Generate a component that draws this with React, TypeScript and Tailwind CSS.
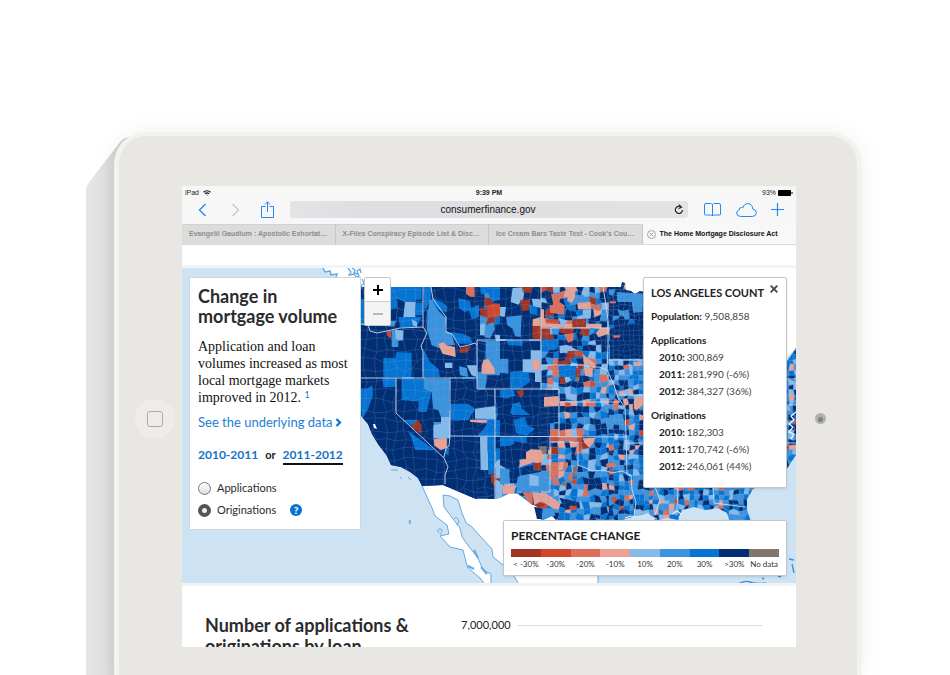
import React, { useState } from "react";

const NAVY = "#022e74";
const BLUE = "#0574d2";
const MID = "#3b92dd";
const PALE = "#86bbe9";
const SALMON = "#e9a294";
const CORAL = "#dd6e59";
const RED = "#d2472c";
const BRICK = "#a23423";
const GRAY = "#80766d";
const WATER = "#cde3f4";
const COAST = "#62aae2";

/* ---------- county mosaic ---------- */

function hash(a: number, b: number, c: number) {
  const s = Math.sin(a * 127.1 + b * 311.7 + c * 74.7) * 43758.5453;
  return s - Math.floor(s);
}

type Weights = [string, number][];

const WEST: Weights = [[NAVY, 74], [BLUE, 16], [MID, 7], [PALE, 2], [SALMON, 1]];
const ROCKIES: Weights = [[NAVY, 55], [BLUE, 22], [MID, 13], [PALE, 6], [SALMON, 2], [BRICK, 2]];
const DAKOTA: Weights = [[NAVY, 42], [BLUE, 17], [MID, 14], [PALE, 9], [SALMON, 7], [CORAL, 5], [BRICK, 5], [RED, 1]];
const PLAINS: Weights = [[NAVY, 27], [BLUE, 23], [MID, 19], [PALE, 15], [SALMON, 7], [CORAL, 5], [BRICK, 2], [RED, 2]];
const NORTH: Weights = [[NAVY, 80], [BLUE, 8], [MID, 8], [PALE, 2], [SALMON, 2]];
const MIDWEST: Weights = [[NAVY, 19], [BLUE, 29], [MID, 29], [PALE, 14], [SALMON, 5], [CORAL, 3], [RED, 1]];

function pick(weights: Weights, r: number) {
  let left = r * 100;
  for (const [color, w] of weights) {
    left -= w;
    if (left <= 0) return color;
  }
  return weights[0][0];
}

function weightsAt(x: number, y: number) {
  if (x < 477) return WEST;
  if (x < 541) return ROCKIES;
  if (x > 606 && y < 345) return NORTH;
  if (x < 595 && y < 380) return DAKOTA;
  if (x < 595 && y < 490) return PLAINS;
  return MIDWEST;
}

function mosaic(x0: number, x1: number, y0: number, y1: number, size: number, seed: number) {
  const cells: { points: string; fill: string }[] = [];
  const cols = Math.ceil((x1 - x0) / size);
  const rows = Math.ceil((y1 - y0) / size);
  const vertex = (i: number, j: number) => {
    const jx = i === 0 || i === cols ? 0 : (hash(i, j, seed) - 0.5) * size * 0.55;
    const jy = (hash(i, j, seed + 9) - 0.5) * size * 0.55;
    return `${(x0 + i * size + jx).toFixed(1)},${(y0 + j * size + jy).toFixed(1)}`;
  };
  for (let j = 0; j < rows; j++) {
    for (let i = 0; i < cols; i++) {
      cells.push({
        points: [vertex(i, j), vertex(i + 1, j), vertex(i + 1, j + 1), vertex(i, j + 1)].join(" "),
        fill: pick(weightsAt(x0 + i * size, y0 + j * size), hash(i, j, seed + 31)),
      });
    }
  }
  return cells;
}

const COUNTIES = [
  ...mosaic(355, 477, 280, 505, 10, 3),
  ...mosaic(477, 541, 280, 505, 9, 5),
  ...mosaic(541, 609, 280, 530, 6, 8),
  ...mosaic(609, 799, 280, 530, 5, 12),
];

/* ---------- larger counties, each group on a fine grid of thirds ---------- */

type Shape = [string, string];

const NORTHWEST: Shape[] = [
  [NAVY, "18,190 205,197 200,345 18,345"],
  [BLUE, "105,75 200,75 200,112 165,118 150,120 120,108 105,130"],
  [PALE, "150,120 182,120 180,165 145,165"],
  [BLUE, "182,122 203,122 203,160 182,160"],
  [BLUE, "130,165 200,165 185,195 135,195"],
  [PALE, "170,172 186,180 186,195 174,190"],
  [RED, "95,210 108,206 110,230 97,222"],
  [MID, "110,205 145,205 145,235 130,237 130,255 110,255"],
  [PALE, "120,202 145,207 143,235 122,232"],
  [BLUE, "18,110 30,110 30,130 18,155"],
  [BLUE, "85,288 120,288 125,270 170,272 170,345 85,345"],
  [NAVY, "230,75 375,75 375,237 366,330 366,345 230,345 206,262"],
  [BLUE, "205,75 230,75 228,112 218,130 208,150"],
  [BLUE, "205,260 225,300 250,320 255,345 205,345"],
  [MID, "222,115 235,112 245,140 275,170 270,205 290,215 300,250 262,250 262,262 230,250 215,200"],
  [SALMON, "250,245 266,241 275,250 300,255 302,285 262,275"],
  [BRICK, "315,258 350,252 335,272 312,272"],
  [PALE, "270,302 292,302 292,318 270,318"],
  [BLUE, "285,210 312,245 355,245 345,225 325,215"],
  [BLUE, "230,108 262,120 278,135 275,150 245,142"],
  [CORAL, "333,75 359,75 359,105 345,104 333,95"],
  [BRICK, "372,140 385,137 398,142 400,168 378,162"],
  [RED, "395,132 418,124 438,125 440,150 430,166 400,166"],
  [BLUE, "310,108 345,118 350,145 328,150 312,138"],
  [BLUE, "375,75 450,75 450,110 410,120 400,92 378,98"],
  [BLUE, "340,140 372,128 372,165 350,172"],
  [MID, "390,190 415,180 420,200 405,230 388,225"],
  [MID, "368,237 450,237 450,345 395,345 390,380 368,380"],
  [NAVY, "368,237 392,240 392,295 378,330 368,330"],
  [SALMON, "380,310 386,293 400,291 418,318 420,335 380,335"],
  [PALE, "335,310 365,310 365,345 350,340"],
  [MID, "312,312 335,318 340,345 315,340"],
  [NAVY, "395,340 450,340 450,380 395,380"],
  [NAVY, "18,350 122,350 122,480 18,480"],
  [BLUE, "18,380 35,380 52,370 54,400 40,440 22,470 18,440"],
  [BLUE, "82,347 122,347 122,375 85,375"],
  [NAVY, "122,350 283,350 283,480 150,480 122,455"],
  [BLUE, "140,350 205,350 205,375 230,390 215,450 190,450 190,418 140,415"],
  [MID, "205,350 283,350 283,465 258,465 250,445 235,440 230,390 205,380"],
  [PALE, "258,465 283,465 283,480 258,480"],
  [NAVY, "286,350 365,350 365,440 286,480"],
  [BLUE, "286,425 340,425 360,440 340,475 286,475"],
  [PALE, "360,440 420,432 420,470 360,470"],
  [SALMON, "345,473 392,473 392,480 345,480"],
];

const SOUTHWEST: Shape[] = [
  [NAVY, "0,0 130,0 285,110 280,200 80,200"],
  [NAVY, "285,50 420,50 420,235 270,235"],
  [BLUE, "145,0 190,0 170,18"],
  [BRICK, "167,20 187,0 200,15 200,42"],
  [BLUE, "158,32 240,90 180,90 172,60"],
  [NAVY, "202,0 236,0 236,80 202,50"],
  [PALE, "258,0 285,0 285,55 235,55 235,15 258,12"],
  [SALMON, "345,0 395,0 395,8 345,8"],
  [NAVY, "286,0 345,5 380,10 370,48 286,48"],
  [BLUE, "368,47 395,15 398,0 420,0 420,50"],
  [PALE, "375,50 398,50 398,90 402,150 377,150"],
  [BLUE, "398,50 420,50 420,160 400,165"],
  [BRICK, "408,160 420,160 420,200 408,185"],
  [BLUE, "422,85 450,85 450,112 422,118"],
  [PALE, "422,130 450,130 450,175 422,175"],
  [BLUE, "422,0 450,0 450,50 422,50"],
  [PALE, "422,178 445,190 440,235 422,235"],
  [SALMON, "443,200 485,196 475,222 443,222"],
];

const DAKOTAS: Shape[] = [
  [NAVY, "0,75 122,75 122,232 0,232"],
  [PALE, "38,78 75,75 70,110 55,128 32,120"],
  [BRICK, "65,75 97,75 93,93 70,92"],
  [BRICK, "60,115 90,112 88,145 66,148"],
  [BLUE, "86,130 112,125 112,160 90,155"],
  [PALE, "95,110 122,112 122,138 100,132"],
  [MID, "18,165 65,160 62,225 45,222 38,200 22,190"],
  [PALE, "0,135 18,135 14,165 0,162"],
  [NAVY, "0,237 122,237 122,380 0,380"],
  [BLUE, "20,235 68,235 68,252 25,250"],
  [MID, "0,290 25,290 25,335 0,332"],
  [BLUE, "30,330 85,325 90,360 60,380 30,380"],
  [PALE, "68,292 92,292 92,265 122,265 122,360 105,360 105,332 68,330"],
  [SALMON, "98,293 120,293 120,325 98,322"],
  [BRICK, "97,190 150,190 150,225 122,232 97,230"],
  [SALMON, "98,172 122,165 122,192 98,192"],
  [SALMON, "123,142 132,142 132,168 148,172 178,185 305,185 305,198 123,196"],
  [RED, "135,172 176,172 176,186 138,184"],
  [BRICK, "135,145 145,142 147,168 135,166"],
  [CORAL, "153,95 180,95 178,120 194,130 192,158 150,152 148,130 160,128"],
  [SALMON, "192,75 226,75 226,105 216,122 202,118 202,90"],
  [PALE, "175,168 205,176 185,195"],
  [BRICK, "217,172 258,170 258,196 217,196"],
  [MID, "226,98 252,100 258,122 232,124"],
  [SALMON, "232,122 272,120 272,142 234,142"],
  [PALE, "248,142 274,142 272,170 248,168"],
  [CORAL, "286,130 302,128 300,146 288,146"],
  [SALMON, "300,198 330,196 328,215 295,226 288,214"],
  [BRICK, "178,198 222,198 220,215 182,214"],
  [CORAL, "192,216 222,214 220,236 204,242"],
  [BRICK, "242,198 268,200 266,222 240,220"],
  [BLUE, "125,235 178,230 172,262 126,268"],
  [PALE, "178,252 200,248 240,268 215,270 180,274"],
  [BRICK, "203,268 225,266 222,290 198,295"],
  [RED, "222,266 244,266 256,282 240,284 224,282"],
  [SALMON, "246,275 266,290 286,305 284,318 258,305"],
  [BRICK, "176,297 198,295 196,308 176,308"],
  [CORAL, "157,312 176,312 176,345 158,345"],
  [BLUE, "177,312 230,312 228,345 177,345"],
  [BRICK, "228,318 242,320 240,345 226,342"],
  [SALMON, "252,318 278,318 278,345 256,342"],
  [CORAL, "142,348 158,345 160,368 142,366"],
  [BRICK, "180,346 195,346 194,366 180,366"],
  [GRAY, "226,346 240,346 238,358 226,358"],
  [NAVY, "0,384 175,384 175,480 0,480"],
  [BLUE, "0,384 42,384 45,402 18,410 0,405"],
  [BRICK, "48,386 70,384 72,400 60,406"],
  [BLUE, "38,425 60,420 66,440 92,460 80,478 50,470 30,452"],
  [SALMON, "132,405 175,402 175,432 132,434"],
  [SALMON, "180,418 232,418 232,432 180,432"],
  [RED, "195,420 212,422 210,436 196,434"],
  [CORAL, "258,418 288,418 286,434 258,432"],
  [NAVY, "330,200 428,180 428,290 330,290"],
  [MID, "350,90 428,95 428,150 400,152 395,120 352,120"],
  [CORAL, "328,118 348,118 348,124 330,124"],
  [SALMON, "400,300 424,300 422,312 402,312"],
  [SALMON, "402,408 428,402 428,430 410,445 402,440"],
  [CORAL, "338,220 362,220 360,226 342,228"],
];

const TEXAS: Shape[] = [
  [NAVY, "0,0 150,0 150,64 0,64"],
  [BLUE, "40,15 75,5 82,30 105,42 80,62 48,55"],
  [BLUE, "0,65 45,65 42,88 0,96"],
  [NAVY, "0,95 62,90 78,105 55,155 60,185 0,150"],
  [NAVY, "80,66 150,66 150,105 112,95 80,100"],
  [SALMON, "78,112 92,103 128,104 132,125 122,150 102,142 60,156 58,134 78,132"],
  [GRAY, "112,94 140,94 140,116 128,118 124,106"],
  [BRICK, "98,146 124,142 124,164 104,164"],
  [NAVY, "62,158 98,150 100,165 122,168 120,180 62,182"],
  [MID, "58,182 148,166 148,228 50,228"],
  [PALE, "88,178 116,184 116,212 88,212"],
  [MID, "0,160 28,162 32,205 0,208"],
  [NAVY, "28,170 55,175 50,205 30,205"],
  [SALMON, "8,212 32,208 32,235 8,237"],
  [CORAL, "150,42 178,42 178,65 150,65"],
  [RED, "152,66 176,66 176,80 152,80"],
  [CORAL, "178,66 232,66 232,78 178,78"],
  [RED, "232,66 246,66 244,98 234,118"],
  [CORAL, "152,142 204,142 204,155 190,168 176,168 176,180 152,198"],
  [SALMON, "178,142 192,142 188,165 174,165"],
  [GRAY, "218,156 232,150 230,185 220,184"],
  [CORAL, "206,174 218,172 216,196 206,196"],
  [GRAY, "186,200 200,198 200,212 186,212"],
  [CORAL, "68,233 98,233 98,270 82,258"],
  [SALMON, "98,233 138,235 182,265 176,284 158,280 130,262 102,272"],
  [BRICK, "102,270 122,260 135,270 118,280"],
  [NAVY, "100,275 128,280 126,312 108,312"],
  [MID, "128,282 160,282 166,300 150,316 126,316"],
  [NAVY, "178,248 238,262 240,280 196,285"],
  [RED, "208,272 230,272 230,284 208,284"],
  [RED, "334,248 344,244 352,256 340,264"],
  [CORAL, "318,146 344,142 348,156 320,158"],
  [SALMON, "248,70 286,68 280,84 268,98 252,82"],
];

const BORDERS = [
  "361,324 368,325 370,331 377,333 387,331 400,328 423,327",
  "423,287 423,327 427,333 421,346 423,352 423,378",
  "361,378 477,378",
  "431,287 433,299 446,317 446,332 452,334 460,347 469,345 475,343 477,345",
  "477,340 541,340",
  "477,340 477,389 559,389 559,437",
  "541,287 541,389",
  "450,378 450,436 449,446 446,448 444,457",
  "396,378 396,413 444,458 448,467 445,475 445,484",
  "495,389 495,499",
  "450,436 627,437",
  "550,437 550,492 517,492",
  "550,442 578,442 578,465 586,468 592,471 604,470 612,473 622,471 631,475",
  "541,328 608,328",
  "541,365 582,365 590,367 599,367 607,370",
  "603,287 606,305 608,320 608,345 607,370 614,385 618,398 625,407 626,437 627,475 632,476",
  "559,402 620,402",
  "609,360 648,360",
  "617,395 648,395",
  "627,443 648,443",
  "631,475 632,490 636,502 634,516",
  "655,487 660,500 655,515",
  "678,487 677,509",
  "713,487 714,503 745,507",
  "786,379 796,379",
  "786,405 796,405",
  "786,443 796,443",
];

const US_OUTLINE =
  "355,287 621,287 622,282 625,283 626,290 631,291 635,294 640,291 650,293 700,300 740,340 780,368 788,360 796,348 796,455 790,464 786,470 766,482 753,489 747,499 747,510 751,522 730,522 727,513 718,508 706,510 694,507 682,510 678,520 668,518 656,520 648,513 636,516 625,519 615,524 560,524 552,516 541,521 537,519 534,506 523,498 517,493 508,494 500,498 495,499 476,499 443,485 422,486 418,478 410,472 401,467 391,465 387,456 378,444 372,434 368,424 362,417 355,405";

const GROUPS: { at: string; shapes: Shape[] }[] = [
  { at: "translate(355 262) scale(0.3333)", shapes: NORTHWEST },
  { at: "translate(355 420) scale(0.3333)", shapes: SOUTHWEST },
  { at: "translate(500 262) scale(0.3333)", shapes: DAKOTAS },
  { at: "translate(500 415) scale(0.3333)", shapes: TEXAS },
];

function MortgageMap() {
  return (
    <svg
      className="block h-full w-full"
      viewBox="182 268 614 315"
      preserveAspectRatio="xMidYMid slice"
      role="img"
      aria-label="County map of mortgage volume change"
    >
      <defs>
        <clipPath id="us">
          <polygon points={US_OUTLINE} />
        </clipPath>
      </defs>
      <rect x="0" y="200" width="1000" height="500" fill={WATER} />
      <polygon
        fill="#fff"
        points="322,268 326,272 332,273 336,277 344,281 356,290 620,300 760,370 788,356 796,348 796,268"
      />
      <polyline fill="none" stroke={COAST} strokeWidth="1.5" points="323,268 325,272 330,271 331,275 337,274 336,277" />
      <g fill="none" stroke={COAST} strokeWidth="1.3">
        <polyline points="348,268 351,272 349,275 354,274 356,277 359,276 357,271 360,269 361,273" />
        <polyline points="352,268 355,270 354,273 358,274" />
        <polyline points="362,279 364,283 361,286 364,290 363,296" />
      </g>
      <polygon
        fill="#fff"
        stroke={COAST}
        strokeWidth="1"
        points="422,486 427,497 432,508 435,516 447,525 449,534 440,536 450,547 463,550 466,562 468,568 480,578 486,586 491,584 491,574 483,570 478,558 470,548 462,537 460,528 453,519 444,507 443,495 450,496 458,500 462,513 466,523 472,527 480,536 492,549 493,557 503,565 512,573 520,586 598,586 598,540 612,524 560,500 508,492 476,497 443,483"
      />
      <g fill="none" stroke={COAST} strokeWidth="1">
        <path d="M439 533q-3-4 1-4t0 6M454 519q3-4 5 3l-2 3M410 520q1 3 0 4q-2-2 0-4M391 470h7M400 477l2 2M408 477l3 3" />
        <path d="M474 550l4 8M481 567l6 7M468 566l6 3" strokeWidth="2" />
      </g>
      <g clipPath="url(#us)">
        <g strokeWidth="0.4">
          {COUNTIES.map((c, i) => (
            <polygon key={i} points={c.points} fill={c.fill} stroke={c.fill} />
          ))}
        </g>
        {GROUPS.map((g) => (
          <g key={g.at} transform={g.at}>
            {g.shapes.map(([fill, points], i) => (
              <polygon key={i} points={points} fill={fill} />
            ))}
          </g>
        ))}
        <g fill="none" stroke="#86b0e4" strokeWidth="0.5" strokeOpacity="0.22">
          {COUNTIES.map((c, i) => (
            <polygon key={i} points={c.points} />
          ))}
        </g>
        <g fill="none" stroke="#c9dcf0" strokeWidth="0.9">
          {BORDERS.map((p, i) => (
            <polyline key={i} points={p} />
          ))}
        </g>
      </g>
      <path d="M373 424l1 4l3 1l-2-5z" fill="#fff" />
      <g fill="none" stroke="#fff" strokeWidth="1.2">
        <path d="M796 412l-5 4l3 4l-5 4l4 3l-4 5l5 2l-3 5" />
        <path d="M625 518l6-2l5 1M672 514l5-3l4 3l-2 4M652 517l5 2" stroke="#dbeaf7" />
      </g>
      <g fill="none" stroke={MID} strokeWidth="1.4">
        <path d="M738 584q8-4 12-2t16 1M785 549l2 2M789 559l5 1M792 564l2 9M778 576l3 1M762 578l2 1" />
      </g>
    </svg>
  );
}

/* ---------- browser chrome ---------- */

function BrowserChrome() {
  const tabs = [
    "Evangelii Gaudium : Apostolic Exhortation",
    "X-Files Conspiracy Episode List & Discussion",
    "Ice Cream Bars Taste Test - Cook's Country",
  ];
  return (
    <header className="font-['Liberation_Sans',Arial,sans-serif]">
      <div className="bg-[#f7f7f8]">
        <div className="grid h-[13px] grid-cols-3 items-center px-[3px] text-[7px] leading-3 text-[#222]">
          <span className="flex items-center gap-1">
            iPad
            <svg className="h-[6px] w-[8px]" viewBox="0 0 16 12" fill="none" stroke="#111" strokeWidth="2.4">
              <path d="M1 4.5q7-6 14 0M4 7.5q4-3.500 8 0" />
              <path d="M6.500 9.500h3L8 11.500z" fill="#111" stroke="none" />
            </svg>
          </span>
          <span className="text-center font-bold">9:39 PM</span>
          <span className="flex items-center justify-end gap-[2px]">
            93%
            <svg className="h-[6px] w-[15px]" viewBox="0 0 15 6">
              <rect x="0" y="0" width="13" height="6" rx="1" fill="#000" />
              <rect x="13.500" y="2" width="1" height="2" fill="#000" />
            </svg>
          </span>
        </div>
        <div className="flex h-[25px] items-center pr-3 pb-[4px] pl-[16px] text-[#2388f5]">
          <button type="button" aria-label="Back" className="w-[10px]">
            <svg className="h-[14px] w-[9px]" viewBox="0 0 9 14" fill="none" stroke="currentColor" strokeWidth="1.4">
              <path d="M7.500 1L1.500 7l6 6" />
            </svg>
          </button>
          <button type="button" aria-label="Forward" className="ml-[23px] w-[10px] text-[#c5c6c9]">
            <svg className="h-[14px] w-[9px]" viewBox="0 0 9 14" fill="none" stroke="currentColor" strokeWidth="1.200">
              <path d="M1.500 1l6 6l-6 6" />
            </svg>
          </button>
          <button type="button" aria-label="Share" className="ml-5 w-[14px]">
            <svg className="h-[17px] w-[13px]" viewBox="0 0 13 17" fill="none" stroke="currentColor">
              <path d="M4.500 5.500h-4v11h12v-11h-4M6.500 11V.8M3.800 3.500L6.500.8l2.700 2.700" />
            </svg>
          </button>
          <div className="ml-[15px] flex h-[17px] min-w-0 flex-1 items-center rounded-[3px] bg-linear-to-r from-[#e4e4e7] via-[#dddee2] via-20% to-[#e3e3e5] pr-1">
            <input
              type="text"
              aria-label="Address"
              defaultValue="consumerfinance.gov"
              className="h-full min-w-0 flex-1 bg-transparent pl-3 text-center text-[10px] text-[#111] outline-none"
            />
            <button type="button" aria-label="Reload" className="text-[#222]">
              <svg className="h-[11px] w-[10px]" viewBox="0 0 10 11" fill="none" stroke="currentColor" strokeWidth="1.200">
                <path d="M8.500 6a3.600 3.600 0 1 1-1.300-2.900" />
                <path d="M4.800.6L7.500 3.200L4.500 4.500" />
              </svg>
            </button>
          </div>
          <button type="button" aria-label="Bookmarks" className="ml-4">
            <svg className="h-[15px] w-[17px]" viewBox="0 0 17 15" fill="none" stroke="currentColor">
              <path d="M8.500 2.500Q8 1.500 6.500 1.500H2Q.5 1.500.5 3v9q0 1 1 1h5q1.500 0 2 1q.5-1 2-1h5q1 0 1-1V3q0-1.500-1.500-1.500h-4.500Q9 1.500 8.500 2.500V14" />
            </svg>
          </button>
          <button type="button" aria-label="iCloud tabs" className="ml-[15px]">
            <svg className="h-[14px] w-[21px]" viewBox="0 0 21 14" fill="none" stroke="currentColor">
              <path d="M4.500 13.500Q.6 13.200.6 10Q.8 7.500 3.200 7Q3 4.500 5.500 4.500Q6.200 4.500 6.800 4.900Q8 .6 12 .6Q16.500 1 16.700 6Q20.400 6.500 20.400 9.800Q20.200 13.200 16.500 13.500Z" />
            </svg>
          </button>
          <button type="button" aria-label="New tab" className="ml-[14px]">
            <svg className="h-[13px] w-[13px]" viewBox="0 0 13 13" fill="none" stroke="currentColor" strokeWidth="1.200">
              <path d="M6.500 0v13M0 6.500h13" />
            </svg>
          </button>
        </div>
      </div>
      <nav className="grid h-[21px] grid-cols-4 border-b border-[#d8d8da] text-[7px] font-bold">
        {tabs.map((t) => (
          <button
            key={t}
            type="button"
            className="truncate border-t border-r border-t-[#d2d2d2] border-r-[#c6c6c6] bg-[#dcdcdc] px-[7px] text-left text-[#8e8e8e]"
          >
            {t}
          </button>
        ))}
        <button
          type="button"
          className="flex items-center gap-1 bg-[#f8f8f9] pl-1 whitespace-nowrap text-[#111]"
        >
          <svg className="h-[9px] w-[9px]" viewBox="0 0 9 9" fill="none" stroke="#888" strokeWidth="0.700">
            <circle cx="4.500" cy="4.500" r="4" />
            <path d="M2.800 2.800l3.400 3.400M6.200 2.800L2.800 6.200" />
          </svg>
          The Home Mortgage Disclosure Act
        </button>
      </nav>
    </header>
  );
}

/* ---------- panels over the map ---------- */

const RADIO =
  "h-[13px] w-[13px] shrink-0 appearance-none rounded-full border border-[#777] bg-linear-to-b from-white to-[#ddd] checked:border-4 checked:border-[#555] checked:bg-none checked:bg-[#eee]";

function VolumePanel() {
  const [kind, setKind] = useState("originations");
  return (
    <section className="absolute top-[9px] left-[7px] h-[253px] w-[172px] border border-[#d3d6d8] bg-white pt-2 pl-2 text-[#2b2b2e]">
      <h1 className="text-[18px] leading-5 font-bold whitespace-nowrap">
        Change in
        <br />
        mortgage volume
      </h1>
      <p className="mt-3 font-['Liberation_Serif',Georgia,serif] text-[14px] leading-[17px] whitespace-nowrap text-[#111]">
        Application and loan
        <br />
        volumes increased as most
        <br />
        local mortgage markets
        <br />
        improved in 2012.{" "}
        <a href="#note" className="align-[4px] font-[Lato,sans-serif] text-[9px] leading-none text-[#1a7fd4]">
          1
        </a>
      </p>
      <a href="#data" className="mt-2 flex items-center gap-[2px] text-[13px] leading-4 whitespace-nowrap text-[#1d80d2]">
        See the underlying data
        <svg className="h-[9px] w-[7px]" viewBox="0 0 7 9" fill="none" stroke="#0f72cc" strokeWidth="2.200">
          <path d="M1.500 1l3.500 3.500L1.500 8" />
        </svg>
      </a>
      <div className="mt-[17px] flex items-baseline text-[12px] leading-4 font-bold text-[#1473cb]">
        <button type="button">2010-2011</button>
        <span className="mx-[7px] text-[11px] text-[#222]">or</span>
        <button type="button" className="border-b-2 border-[#111]">2011-2012</button>
      </div>
      <div className="mt-[15px] flex flex-col gap-[6px] text-[11px] leading-4">
        <label className="flex items-center gap-[6px]">
          <input
            type="radio"
            name="kind"
            className={RADIO}
            checked={kind === "applications"}
            onChange={() => setKind("applications")}
          />
          Applications
        </label>
        <div className="flex items-center">
          <label className="flex items-center gap-[6px]">
            <input
              type="radio"
              name="kind"
              className={RADIO}
              checked={kind === "originations"}
              onChange={() => setKind("originations")}
            />
            Originations
          </label>
          <button
            type="button"
            aria-label="What are originations?"
            className="ml-[14px] h-3 w-3 rounded-full bg-[#0b72cf] text-center text-[10px] leading-3 font-black text-white"
          >
            ?
          </button>
        </div>
      </div>
    </section>
  );
}

function ZoomControl() {
  return (
    <div className="absolute top-[9px] left-[182px] flex w-[27px] flex-col rounded-[2px] border border-[#c4c6c8] bg-white">
      <button type="button" aria-label="Zoom in" className="flex h-[23px] items-center justify-center">
        <svg className="h-[10px] w-[10px]" viewBox="0 0 10 10" stroke="#000" strokeWidth="2">
          <path d="M5 0v10M0 5h10" />
        </svg>
      </button>
      <button
        type="button"
        aria-label="Zoom out"
        className="flex h-6 items-center justify-center border-t border-[#ccc] bg-[#f4f4f4]"
      >
        <svg className="h-[10px] w-[10px]" viewBox="0 0 10 10" stroke="#b8b8b8" strokeWidth="2">
          <path d="M0 5h10" />
        </svg>
      </button>
    </div>
  );
}

function Figures({ title, rows }: { title: string; rows: [string, string][] }) {
  return (
    <div className="mt-[7px]">
      <h3 className="font-bold text-[#222]">{title}</h3>
      <dl className="pl-2">
        {rows.map(([year, value]) => (
          <div key={year} className="flex gap-[2px]">
            <dt className="font-bold text-[#222]">{year}:</dt>
            <dd>{value}</dd>
          </div>
        ))}
      </dl>
    </div>
  );
}

function CountyPanel() {
  return (
    <section className="absolute top-[9px] right-[9px] h-[211px] w-[144px] rounded-[2px] border border-[#c3c7ca] bg-white pt-[7px] pl-[7px] text-[10px] leading-[17px] text-[#444] shadow-sm">
      <div className="flex">
        <h2 className="w-[116px] text-[11px] leading-4 font-bold whitespace-nowrap text-[#222]">
          LOS ANGELES COUNT
        </h2>
        <button type="button" aria-label="Close" className="ml-[3px] h-2">
          <svg className="h-2 w-2" viewBox="0 0 8 8" stroke="#444" strokeWidth="1.800">
            <path d="M.7.700l6.600 6.600M7.300.700L.7 7.300" />
          </svg>
        </button>
      </div>
      <p className="mt-[7px]">
        <strong className="text-[#222]">Population:</strong> 9,508,858
      </p>
      <Figures title="Applications" rows={[["2010", "300,869"], ["2011", "281,990 (-6%)"], ["2012", "384,327 (36%)"]]} />
      <Figures title="Originations" rows={[["2010", "182,303"], ["2011", "170,742 (-6%)"], ["2012", "246,061 (44%)"]]} />
    </section>
  );
}

function Legend() {
  const steps = [
    ["< -30%", "bg-[#a23423]"],
    ["-30%", "bg-[#d2472c]"],
    ["-20%", "bg-[#dd6e59]"],
    ["-10%", "bg-[#e9a294]"],
    ["10%", "bg-[#86bbe9]"],
    ["20%", "bg-[#3b92dd]"],
    ["30%", "bg-[#0574d2]"],
    [">30%", "bg-[#022e74]"],
    ["No data", "bg-[#80766d]"],
  ];
  return (
    <section className="absolute right-[9px] bottom-[7px] w-[284px] rounded-[2px] border border-[#c3c7ca] bg-white px-[7px] pt-[7px] pb-[5px] shadow-sm">
      <h2 className="text-[12px] leading-4 font-bold text-[#1c1c1c]">PERCENTAGE CHANGE</h2>
      <ul className="mt-[5px] grid grid-cols-9 text-center text-[8px] leading-3 whitespace-nowrap text-[#333]">
        {steps.map(([label, color]) => (
          <li key={label}>
            <div className={`mb-px h-2 ${color}`} />
            {label}
          </li>
        ))}
      </ul>
    </section>
  );
}

/* ---------- page ---------- */

export default function App() {
  return (
    <div className="relative flex h-screen flex-col overflow-hidden bg-white pt-[132px] pr-[88px] pl-[114px] font-[Lato,'Noto_Sans',sans-serif]">
      <svg className="absolute top-[137px] left-[86px] h-full w-[60px]" viewBox="0 0 60 675" preserveAspectRatio="xMinYMin slice" aria-hidden="true">
        <defs>
          <linearGradient id="side" x1="0" x2="1">
            <stop offset="0" stopColor="#e6e6e6" />
            <stop offset="0.300" stopColor="#e0e0e0" />
            <stop offset="0.500" stopColor="#d2d2d2" />
          </linearGradient>
        </defs>
        <path d="M0 675V54Q0 49 4 44L34 5Q38 0 46 0H60V675Z" fill="url(#side)" />
      </svg>
      <main className="relative flex min-h-0 flex-1 rounded-t-[32px] border-x-[5px] border-t-4 border-[#f3f3eb] bg-[#e8e7e3] pt-[50px] pb-[28px] shadow-[0_0_24px_rgba(0,0,0,0.06)]">
        <div className="flex w-[63px] shrink-0 items-center justify-center pt-1 pl-2">
          <button
            type="button"
            aria-label="Home"
            className="flex h-10 w-10 items-center justify-center rounded-full bg-[#edece8]"
          >
            <span className="h-4 w-4 rounded-[3px] border border-[#acaba6]" />
          </button>
        </div>
        <div className="flex min-w-0 flex-1 flex-col overflow-hidden bg-white">
          <BrowserChrome />
          <div className="relative mt-5 h-[321px] shrink-0 border-y-[3px] border-[#f3f3f3]">
            <MortgageMap />
            <VolumePanel />
            <ZoomControl />
            <CountyPanel />
            <Legend />
          </div>
          <section className="flex shrink-0 gap-[38px] pt-[29px] pr-[33px] pl-[23px]">
            <h2 className="w-[218px] shrink-0 text-[18px] leading-[21px] font-bold text-[#2b2b2e]">
              Number of applications & originations by loan
            </h2>
            <div className="flex h-5 flex-1 items-center gap-[6px] text-[11px] text-[#222]">
              7,000,000
              <hr className="flex-1 border-[#dedede]" />
            </div>
          </section>
        </div>
        <div className="flex w-[61px] shrink-0 items-center justify-center pt-1 pr-3">
          <span className="flex h-[11px] w-[11px] items-center justify-center rounded-full bg-[#b3b2aa] pt-px">
            <span className="h-[5px] w-[5px] rounded-full bg-[#7d8280]" />
          </span>
        </div>
      </main>
    </div>
  );
}
